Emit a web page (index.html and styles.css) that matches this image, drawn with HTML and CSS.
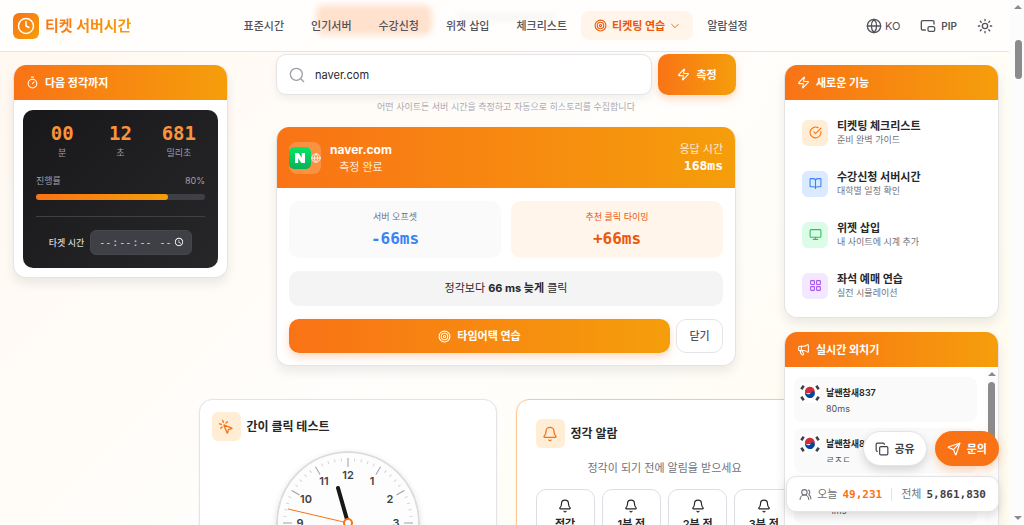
FILE: index.html
```
<!DOCTYPE html>
<html lang="ko">
<head>
    <meta charset="UTF-8">
    <meta name="viewport" content="width=device-width, initial-scale=1.0">
    <title>티켓 서버시간</title>
    <link rel="stylesheet" href="styles.css">
</head>
<body>

    <!-- Shared icons -->
    <svg class="sprite" aria-hidden="true">
        <symbol id="i-clock" viewBox="0 0 24 24"><circle cx="12" cy="12" r="10"/><path d="M12 6v6l4 2"/></symbol>
        <symbol id="i-target" viewBox="0 0 24 24"><circle cx="12" cy="12" r="10"/><circle cx="12" cy="12" r="6"/><circle cx="12" cy="12" r="2"/></symbol>
        <symbol id="i-zap" viewBox="0 0 24 24"><path d="M4 14a1 1 0 0 1-.78-1.63l9.9-10.2a.5.5 0 0 1 .86.46l-1.92 6.02A1 1 0 0 0 13 10h7a1 1 0 0 1 .78 1.63l-9.9 10.2a.5.5 0 0 1-.86-.46l1.92-6.02A1 1 0 0 0 11 14z"/></symbol>
        <symbol id="i-globe" viewBox="0 0 24 24"><circle cx="12" cy="12" r="10"/><path d="M12 2a14.5 14.5 0 0 0 0 20 14.5 14.5 0 0 0 0-20M2 12h20"/></symbol>
        <symbol id="i-bell" viewBox="0 0 24 24"><path d="M10.268 21a2 2 0 0 0 3.464 0"/><path d="M3.262 15.326A1 1 0 0 0 4 17h16a1 1 0 0 0 .74-1.673C19.41 13.956 18 12.499 18 8A6 6 0 0 0 6 8c0 4.499-1.411 5.956-2.738 7.326"/></symbol>
        <symbol id="i-flag" viewBox="0 0 20 20">
            <rect width="20" height="20" rx="4" fill="#fff" stroke="none"/>
            <path d="M5.2 10.6a5 5 0 1 1 9.6-1.2z" fill="#cd2e3a" stroke="none"/>
            <path d="M5.1 9a5 5 0 1 0 9.8 2c.2-2-1.6-3.3-3.2-2.3-1 .6-1 1.7-2.3 2.2C7.5 11.6 5.5 10.8 5.1 9z" fill="#0047a0" stroke="none"/>
            <path d="M1.3 6.2l2.4-3.4M16.3 2.8l2.4 3.4M1.3 13.8l2.4 3.4M16.3 17.2l2.4-3.4" stroke="#3f3f46" stroke-width="2.6" stroke-linecap="butt"/>
        </symbol>
    </svg>

    <div class="app">
        <div class="page">

            <header class="header">
                <span class="blur-chip"></span>
                <span class="blur-text"></span>
                <a class="logo" href="#">
                    <span class="logo-mark"><svg class="icon icon-lg"><use href="#i-clock"/></svg></span>
                    <span class="logo-text">티켓 서버시간</span>
                </a>
                <nav class="nav">
                    <a href="#">표준시간</a>
                    <a href="#">인기서버</a>
                    <a href="#">수강신청</a>
                    <a href="#">위젯 삽입</a>
                    <a href="#">체크리스트</a>
                    <button class="nav-active" type="button">
                        <svg class="icon icon-sm"><use href="#i-target"/></svg>
                        티켓팅 연습
                        <svg class="icon icon-xs" viewBox="0 0 24 24"><path d="m4 8 8 8 8-8"/></svg>
                    </button>
                    <a href="#">알람설정</a>
                </nav>
                <div class="tools">
                    <button type="button"><svg class="icon icon-md"><use href="#i-globe"/></svg>KO</button>
                    <button class="pip" type="button">
                        <svg class="icon icon-md" viewBox="0 0 24 24"><path d="M21 9V6a2 2 0 0 0-2-2H4a2 2 0 0 0-2 2v10c0 1.1.9 2 2 2h4"/><rect x="12" y="13" width="10" height="7" rx="2"/></svg>
                        PIP
                    </button>
                    <button type="button" aria-label="테마">
                        <svg class="icon icon-md" viewBox="0 0 24 24"><circle cx="12" cy="12" r="4"/><path d="M12 2v2M12 20v2M4.93 4.93l1.41 1.41M17.66 17.66l1.41 1.41M2 12h2M20 12h2M6.34 17.66l-1.41 1.41M19.07 4.93l-1.41 1.41"/></svg>
                    </button>
                </div>
            </header>

            <div class="layout">

                <!-- Countdown -->
                <aside class="side side-left">
                    <section class="card">
                        <h2 class="card-head">
                            <svg class="icon icon-sm" viewBox="0 0 24 24"><path d="M10 2h4M12 14l3-3"/><circle cx="12" cy="14" r="8"/></svg>
                            다음 정각까지
                        </h2>
                        <div class="timer">
                            <div class="timer-digits">
                                <div><strong>00</strong><span>분</span></div>
                                <div><strong>12</strong><span>초</span></div>
                                <div><strong>681</strong><span>밀리초</span></div>
                            </div>
                            <div class="timer-progress"><span>진행률</span><span>80%</span></div>
                            <div class="bar"><div class="bar-fill"></div></div>
                            <div class="timer-target">
                                <label for="target-time">타겟 시간</label>
                                <input type="time" id="target-time" step="1" lang="en-US">
                            </div>
                        </div>
                    </section>
                </aside>

                <main class="main">
                    <form class="search">
                        <div class="search-box">
                            <svg class="icon icon-md" viewBox="0 0 24 24"><circle cx="11" cy="11" r="9"/><path d="m22 22-4.3-4.3"/></svg>
                            <input type="text" value="naver.com" aria-label="사이트 주소">
                        </div>
                        <button class="btn-primary" type="button"><svg class="icon icon-sm"><use href="#i-zap"/></svg>측정</button>
                    </form>
                    <p class="hint">어떤 사이트든 서버 시간을 측정하고 자동으로 히스토리를 수집합니다</p>

                    <!-- Measurement result -->
                    <section class="card result">
                        <div class="result-head">
                            <div class="site-icon">
                                <svg class="site-logo" viewBox="0 0 22 22">
                                    <defs><linearGradient id="green" x1="0" y1="0" x2="0" y2="1"><stop offset="0" stop-color="#06e566"/><stop offset="1" stop-color="#06b259"/></linearGradient></defs>
                                    <rect width="22" height="22" rx="5" fill="url(#green)"/>
                                    <path d="M6 6h3.6l3.2 4.7V6H16v10h-3.6l-3.2-4.7V16H6z" fill="#fff"/>
                                </svg>
                                <svg class="icon icon-xs"><use href="#i-globe"/></svg>
                            </div>
                            <div class="result-site">
                                <h2>naver.com</h2>
                                <p>측정 완료</p>
                            </div>
                            <div class="result-time">
                                <p>응답 시간</p>
                                <strong>168ms</strong>
                            </div>
                        </div>
                        <div class="result-body">
                            <div class="stats">
                                <div class="stat"><span>서버 오프셋</span><strong>-66ms</strong></div>
                                <div class="stat stat-hot"><span>추천 클릭 타이밍</span><strong>+66ms</strong></div>
                            </div>
                            <p class="advice">정각보다 <strong>66 ms 늦게</strong> 클릭</p>
                            <div class="actions">
                                <button class="btn-primary" type="button"><svg class="icon icon-sm"><use href="#i-target"/></svg>타임어택 연습</button>
                                <button class="btn-plain" type="button">닫기</button>
                            </div>
                        </div>
                    </section>

                    <div class="tools-grid">
                        <section class="card tool">
                            <h2 class="tool-title">
                                <span class="tool-icon"><svg class="icon icon-md" viewBox="0 0 24 24"><path d="M14 4.1 12 6M5.1 8l-2.9-.8M6 12l-1.9 2M7.2 2.2 8 5.1"/><path d="M9.037 9.69a.498.498 0 0 1 .653-.653l11 4.5a.5.5 0 0 1-.074.949l-4.349 1.041a1 1 0 0 0-.74.739l-1.04 4.35a.5.5 0 0 1-.95.074z"/></svg></span>
                                간이 클릭 테스트
                            </h2>
                            <svg class="dial" viewBox="-72 -72 144 144">
                                <circle r="71" fill="#fdfdfd" stroke="#dcdcde" stroke-width="2"/>
                                <g id="ticks"></g>
                                <line x1="0" y1="0" x2="-10" y2="-35" stroke="#18181b" stroke-width="4" stroke-linecap="round"/>
                                <line x1="0" y1="0" x2="-60" y2="-14" stroke="#f97316" stroke-width="1"/>
                                <circle r="4" fill="#fff" stroke="#f97316" stroke-width="2"/>
                            </svg>
                        </section>
                        <section class="card tool tool-alarm">
                            <h2 class="tool-title">
                                <span class="tool-icon"><svg class="icon icon-md"><use href="#i-bell"/></svg></span>
                                정각 알람
                            </h2>
                            <p>정각이 되기 전에 알림을 받으세요</p>
                            <div class="alarms">
                                <button type="button"><svg class="icon icon-bell"><use href="#i-bell"/></svg>정각</button>
                                <button type="button"><svg class="icon icon-bell"><use href="#i-bell"/></svg>1분 전</button>
                                <button type="button"><svg class="icon icon-bell"><use href="#i-bell"/></svg>2분 전</button>
                                <button type="button"><svg class="icon icon-bell"><use href="#i-bell"/></svg>3분 전</button>
                            </div>
                        </section>
                    </div>
                </main>

                <aside class="side side-right">
                    <!-- New features -->
                    <section class="card">
                        <h2 class="card-head"><svg class="icon icon-sm"><use href="#i-zap"/></svg>새로운 기능</h2>
                        <ul class="features">
                            <li><a href="#">
                                <span class="tile tile-orange"><svg class="icon icon-sm" viewBox="0 0 24 24"><path d="M21.801 10A10 10 0 1 1 17 3.335"/><path d="m9 11 3 3L22 4"/></svg></span>
                                <span><b>티켓팅 체크리스트</b><small>준비 완벽 가이드</small></span>
                            </a></li>
                            <li><a href="#">
                                <span class="tile tile-blue"><svg class="icon icon-sm" viewBox="0 0 24 24"><path d="M12 7v14"/><path d="M3 18a1 1 0 0 1-1-1V4a1 1 0 0 1 1-1h5a4 4 0 0 1 4 4 4 4 0 0 1 4-4h5a1 1 0 0 1 1 1v13a1 1 0 0 1-1 1h-6a3 3 0 0 0-3 3 3 3 0 0 0-3-3z"/></svg></span>
                                <span><b>수강신청 서버시간</b><small>대학별 일정 확인</small></span>
                            </a></li>
                            <li><a href="#">
                                <span class="tile tile-green"><svg class="icon icon-sm" viewBox="0 0 24 24"><rect x="2" y="3" width="20" height="14" rx="2"/><path d="M8 21h8M12 17v4"/></svg></span>
                                <span><b>위젯 삽입</b><small>내 사이트에 시계 추가</small></span>
                            </a></li>
                            <li><a href="#">
                                <span class="tile tile-purple"><svg class="icon icon-sm" viewBox="0 0 24 24"><rect x="3" y="3" width="7" height="7" rx="1"/><rect x="14" y="3" width="7" height="7" rx="1"/><rect x="14" y="14" width="7" height="7" rx="1"/><rect x="3" y="14" width="7" height="7" rx="1"/></svg></span>
                                <span><b>좌석 예매 연습</b><small>실전 시뮬레이션</small></span>
                            </a></li>
                        </ul>
                    </section>

                    <!-- Live shouts -->
                    <section class="card">
                        <h2 class="card-head">
                            <svg class="icon icon-sm" viewBox="0 0 24 24"><path d="M11 6a13 13 0 0 0 8.4-2.8A1 1 0 0 1 21 4v12a1 1 0 0 1-1.6.8A13 13 0 0 0 11 14H5a2 2 0 0 1-2-2V8a2 2 0 0 1 2-2z"/><path d="M6 14a12 12 0 0 0 2.4 7.2 2 2 0 0 0 3.2-2.4A8 8 0 0 1 10 14M8 6v8"/></svg>
                            실시간 외치기
                        </h2>
                        <div class="shouts-wrap">
                            <ul class="shouts">
                                <li><svg class="flag"><use href="#i-flag"/></svg><div><b>날쌘참새837</b><span>80ms</span></div></li>
                                <li><svg class="flag"><use href="#i-flag"/></svg><div><b>날쌘참새837</b><span>ㄹㅈㄷ</span></div></li>
                                <li><svg class="flag"><use href="#i-flag"/></svg><div><b>날쌘참새837</b><span>-1ms</span></div></li>
                            </ul>
                            <div class="scrollbar scrollbar-inner">
                                <span class="arrow-up"></span>
                                <span class="thumb"></span>
                            </div>
                        </div>
                    </section>
                </aside>
            </div>

            <!-- Floating actions and visitor counter -->
            <div class="floating">
                <div class="floating-buttons">
                    <button class="share" type="button">
                        <svg class="icon icon-float" viewBox="0 0 24 24"><rect x="8" y="8" width="14" height="14" rx="2"/><path d="M4 16c-1.1 0-2-.9-2-2V4c0-1.1.9-2 2-2h10c1.1 0 2 .9 2 2"/></svg>
                        공유
                    </button>
                    <button class="contact" type="button">
                        <svg class="icon icon-float" viewBox="0 0 24 24"><path d="M14.536 21.686a.5.5 0 0 0 .937-.024l6.5-19a.496.496 0 0 0-.635-.635l-19 6.5a.5.5 0 0 0-.024.937l7.93 3.18a2 2 0 0 1 1.112 1.11z"/><path d="m21.854 2.147-10.94 10.939"/></svg>
                        문의
                    </button>
                </div>
                <div class="visitors">
                    <svg class="icon icon-sm" viewBox="0 0 24 24"><path d="M18 21a8 8 0 0 0-16 0"/><circle cx="10" cy="8" r="5"/><path d="M22 20c0-3.37-2-6.5-4-8a5 5 0 0 0-.45-8.3"/></svg>
                    <span>오늘</span><strong class="today">49,231</strong>
                    <i></i>
                    <span>전체</span><strong>5,861,830</strong>
                </div>
            </div>
        </div>

        <div class="scrollbar">
            <span class="arrow-up"></span>
            <span class="thumb"></span>
            <span class="arrow-down"></span>
        </div>
    </div>

    <script>
        // Draw dial ticks and hour numbers
        const ticks = document.getElementById("ticks");
        let marks = "";
        for (let i = 0; i < 60; i++) {
            const major = i % 5 === 0;
            marks += `<line class="${major ? "tick-major" : "tick"}" y1="-65" y2="${major ? -56 : -62}" transform="rotate(${i * 6})"/>`;
        }
        for (let h = 1; h <= 12; h++) {
            const a = h * Math.PI / 6;
            marks += `<text x="${Math.round(Math.sin(a) * 48)}" y="${Math.round(-Math.cos(a) * 48) + 4}">${h}</text>`;
        }
        ticks.innerHTML = marks;
    </script>

</body>
</html>
```
FILE: styles.css
```
* {
    box-sizing: border-box;
}
body {
    margin: 0;
    font-family: Inter, "Noto Sans CJK KR", sans-serif;
    font-size: 11px;
    line-height: 16px;
    color: #27272a;
}
h2, p, ul {
    margin: 0;
    padding: 0;
    font-size: inherit;
    list-style: none;
}
a {
    color: inherit;
    text-decoration: none;
}
button {
    display: flex;
    align-items: center;
    justify-content: center;
    border: 0;
    background: none;
    font: inherit;
    color: inherit;
    white-space: nowrap;
}
.sprite {
    display: none;
}
.icon {
    flex: none;
    fill: none;
    stroke: currentColor;
    stroke-width: 2;
    stroke-linecap: round;
    stroke-linejoin: round;
}
.icon-xs {
    width: 10px;
    height: 10px;
}
.icon-sm {
    width: 13px;
    height: 13px;
}
.icon-bell, .icon-float {
    width: 14px;
    height: 14px;
}
.icon-md {
    width: 16px;
    height: 16px;
}
.icon-lg {
    width: 18px;
    height: 18px;
}
.app {
    display: flex;
    height: 100vh;
    overflow: hidden;
}
.page {
    position: relative;
    flex: 1;
    min-width: 0;
    overflow: hidden;
    background: linear-gradient(135deg, #fff8f0, #fffefc 50%, #fffbee);
}

/* Header */
.header {
    position: relative;
    z-index: 5;
    display: flex;
    align-items: center;
    justify-content: space-between;
    height: 52px;
    padding: 0 10px 0 13px;
    background: #fffefd;
    border-bottom: 1px solid #e4e4e7;
}
.blur-chip, .blur-text {
    position: absolute;
    top: 5px;
    left: 316px;
    width: 116px;
    height: 30px;
    border-radius: 8px;
    background: #ffe1cd;
    filter: blur(3px);
}
.blur-text {
    top: 14px;
    left: 456px;
    width: 100px;
    height: 6px;
    background: #f5f4f3;
}
.logo {
    display: flex;
    align-items: center;
    gap: 6px;
    font-size: 15px;
    font-weight: 700;
}
.logo-mark {
    display: grid;
    place-items: center;
    width: 26px;
    height: 26px;
    border-radius: 6px;
    background: linear-gradient(135deg, #f97316, #f59e0b);
    color: #fff;
}
.logo-text {
    background: linear-gradient(90deg, #f97316, #f59e0b);
    background-clip: text;
    -webkit-background-clip: text;
    color: transparent;
    line-height: 22px;
}
.nav {
    position: relative;
    display: flex;
    align-items: center;
    gap: 1px;
    font-weight: 500;
    color: #52525b;
}
.nav a {
    padding: 0 13px;
    white-space: nowrap;
}
.nav-active {
    gap: 5px;
    height: 29px;
    padding: 0 13px;
    border-radius: 8px;
    background: #fff5eb;
    color: #ea580c;
    font-weight: 700;
}
.tools {
    display: flex;
    align-items: center;
    gap: 8px;
    color: #52525b;
}
.tools button {
    gap: 3px;
    padding: 6px;
}
.tools .pip {
    gap: 5px;
    font-size: 10px;
    font-weight: 600;
}

/* Sidebars share the row with the main column and sit above it */
.layout {
    display: grid;
    grid-template-columns: 215px 1fr 215px;
    align-items: start;
    padding: 0 10px 0 13px;
}
.side {
    z-index: 2;
    grid-row: 1;
    display: grid;
    gap: 14px;
    margin-top: 13px;
}
.side-left {
    grid-column: 1;
}
.side-right {
    grid-column: 3;
}
.main {
    grid-row: 1;
    grid-column: 1 / -1;
    padding-top: 2px;
}
.card {
    overflow: hidden;
    border: 1px solid #e4e4e7;
    border-radius: 13px;
    background: #fff;
    box-shadow: 0 6px 12px rgba(0, 0, 0, 0.08);
}
.side .card, .result {
    border-top: 0;
}
.card-head {
    display: flex;
    align-items: center;
    gap: 6px;
    height: 35px;
    padding: 0 12px;
    background: linear-gradient(90deg, #f97316, #f59e0b);
    color: #fff;
    font-weight: 700;
}

/* Countdown */
.timer {
    margin: 10px 9px 9px;
    padding: 13px;
    border-radius: 10px;
    background: linear-gradient(135deg, #18181b, #27272a);
    color: #9f9fa9;
    font-size: 9px;
    line-height: 13px;
}
.timer-digits {
    display: grid;
    grid-template-columns: repeat(3, 1fr);
    gap: 6px;
    text-align: center;
}
.timer-digits strong {
    display: block;
    margin-bottom: 3px;
    color: #fb923c;
    font: 700 19px/20px "DejaVu Sans Mono", monospace;
}
.timer-digits span {
    display: block;
}
.timer-progress {
    display: flex;
    justify-content: space-between;
    margin: 15px 0 7px;
}
.bar {
    height: 6px;
    border-radius: 3px;
    background: #3f3f46;
}
.bar-fill {
    width: 78%;
    height: 100%;
    border-radius: 3px;
    background: linear-gradient(90deg, #f97316, #f59e0b);
}
.timer-target {
    display: flex;
    align-items: center;
    justify-content: center;
    gap: 6px;
    margin-top: 16px;
    padding-top: 13px;
    border-top: 1px solid #3f3f46;
    color: #d4d4d8;
    font-weight: 500;
}
.timer-target input {
    width: 102px;
    height: 25px;
    padding: 0 7px;
    border: 1px solid #46464d;
    border-radius: 6px;
    background: #3f3f46;
    color: #d4d4d8;
    color-scheme: dark;
    font: 10px "DejaVu Sans Mono", monospace;
}
.timer-target input::-webkit-calendar-picker-indicator {
    margin-left: 0;
    padding: 0;
}

/* Search */
.search, .result, .hint {
    width: 460px;
    max-width: 100%;
    margin: 0 auto;
}
.search {
    display: flex;
    gap: 6px;
}
.search-box {
    display: flex;
    flex: 1;
    align-items: center;
    gap: 10px;
    height: 41px;
    padding: 0 12px;
    border: 1px solid #e4e4e7;
    border-radius: 10px;
    background: #fff;
    box-shadow: 0 4px 8px rgba(0, 0, 0, 0.06);
    color: #9f9fa9;
}
.search-box input {
    flex: 1;
    min-width: 0;
    padding: 0;
    border: 0;
    outline: 0;
    background: none;
    color: #27272a;
    font: inherit;
}
.btn-primary {
    gap: 6px;
    border-radius: 10px;
    background: linear-gradient(90deg, #f97316, #f59e0b);
    box-shadow: 0 4px 8px rgba(249, 115, 22, 0.25);
    color: #fff;
    font-weight: 700;
}
.search .btn-primary {
    width: 78px;
}
.hint {
    margin-top: 4px;
    color: #a8a8b0;
    font-size: 9px;
    text-align: center;
}

/* Measurement result */
.result {
    margin-top: 12px;
}
.result-head {
    display: flex;
    align-items: center;
    gap: 9px;
    height: 61px;
    padding: 0 12px;
    background: linear-gradient(90deg, #f97316, #f59e0b);
    color: #fff;
}
.site-icon {
    display: flex;
    align-items: center;
    width: 32px;
    height: 32px;
    border-radius: 8px;
    background: rgba(255, 255, 255, 0.2);
}
.site-logo {
    flex: none;
    width: 22px;
    height: 22px;
}
.result-site {
    text-align: center;
}
.result-site h2 {
    font-size: 12px;
    line-height: 18px;
}
.result-site p, .result-time p {
    color: #ffe9d2;
    font-size: 11px;
}
.result-time {
    margin-left: auto;
    text-align: right;
}
.result-time strong {
    display: block;
    font: 700 13px/18px "DejaVu Sans Mono", monospace;
}
.result-body {
    display: grid;
    gap: 13px;
    padding: 13px 12px 12px;
}
.stats {
    display: grid;
    grid-template-columns: 1fr 1fr;
    gap: 10px;
}
.stat {
    padding: 9px;
    border-radius: 10px;
    background: #fafafa;
    color: #71717b;
    font-size: 9px;
    line-height: 14px;
    text-align: center;
}
.stat strong {
    display: block;
    margin-top: 5px;
    color: #3b82f6;
    font: 700 16px/20px "DejaVu Sans Mono", monospace;
}
.stat-hot {
    background: #fff5eb;
}
.stat-hot, .stat-hot strong {
    color: #ea580c;
}
.advice {
    padding: 9px;
    border-radius: 10px;
    background: #f4f4f5;
    line-height: 17px;
    text-align: center;
}
.actions {
    display: flex;
    gap: 6px;
}
.actions button {
    height: 34px;
}
.actions .btn-primary {
    flex: 1;
}
.btn-plain {
    width: 47px;
    border: 1px solid #e4e4e7;
    border-radius: 10px;
    background: #fff;
    color: #52525b;
    font-weight: 500;
}

/* Click test and alarm */
.tools-grid {
    display: grid;
    grid-template-columns: 1fr 1fr;
    gap: 19px;
    width: 615px;
    max-width: 100%;
    margin: 33px auto 0;
}
.tool {
    padding: 12px;
    box-shadow: 0 1px 3px rgba(0, 0, 0, 0.06);
}
.tool-alarm {
    padding: 19px;
    border-color: #fdc88f;
}
.tool-title {
    display: flex;
    align-items: center;
    gap: 6px;
    font-size: 12px;
}
.tool-icon {
    display: grid;
    place-items: center;
    width: 29px;
    height: 29px;
    border-radius: 6px;
    background: #ffedd5;
    color: #f97316;
}
.dial {
    display: block;
    width: 144px;
    margin: 10px auto 0;
    border-radius: 50%;
    box-shadow: 0 2px 6px rgba(0, 0, 0, 0.12);
}
.dial text {
    fill: #3f3f46;
    font-size: 11px;
    font-weight: 600;
    text-anchor: middle;
}
.tick {
    stroke: #d4d4d8;
    stroke-width: 1;
}
.tick-major {
    stroke: #9f9fa9;
    stroke-width: 1;
}
.tool-alarm p {
    margin: 12px 0 13px;
    color: #71717b;
    text-align: center;
}
.alarms {
    display: grid;
    grid-template-columns: repeat(4, 1fr);
    gap: 7px;
}
.alarms button {
    flex-direction: column;
    gap: 3px;
    padding: 9px 0;
    border: 1px solid #dedee2;
    border-radius: 10px;
    background: #fff;
    font-weight: 600;
}

/* New features */
.features {
    display: grid;
    gap: 6px;
    padding: 10px 9px 9px;
}
.features a {
    display: flex;
    align-items: center;
    gap: 9px;
    height: 45px;
    padding: 0 8px;
}
.features b, .features small {
    display: block;
    line-height: 14px;
}
.features small {
    color: #71717b;
    font-size: 9px;
}
.tile {
    display: grid;
    place-items: center;
    width: 26px;
    height: 26px;
    border-radius: 6px;
}
.tile-orange {
    background: #ffedd5;
    color: #f97316;
}
.tile-blue {
    background: #dbeafe;
    color: #3b82f6;
}
.tile-green {
    background: #dcfce7;
    color: #22c55e;
}
.tile-purple {
    background: #f3e8ff;
    color: #a855f7;
}

/* Live shouts */
.shouts-wrap {
    display: flex;
    justify-content: space-between;
}
.shouts {
    display: grid;
    flex: 1;
    gap: 6px;
    padding: 10px 8px 10px 9px;
}
.shouts li {
    display: flex;
    gap: 6px;
    height: 45px;
    padding: 6px;
    border-radius: 8px;
    background: #fafafa;
}
.shouts div {
    padding-top: 2px;
}
.shouts b, .shouts span {
    display: block;
    font-size: 9px;
    line-height: 16px;
}
.shouts b {
    font-weight: 600;
}
.shouts span {
    color: #52525b;
}
.flag {
    width: 20px;
    height: 20px;
}

/* Floating */
.floating {
    position: absolute;
    right: 10px;
    bottom: 13px;
    z-index: 6;
}
.floating-buttons {
    display: flex;
    justify-content: flex-end;
    gap: 8px;
    margin-bottom: 10px;
}
.floating button {
    gap: 6px;
    height: 35px;
    padding: 0 12px;
    border-radius: 18px;
    font-weight: 600;
}
.floating .share {
    padding: 0 11px;
    border: 1px solid #e4e4e7;
    background: #fff;
    box-shadow: 0 4px 10px rgba(0, 0, 0, 0.15);
    color: #3f3f46;
}
.floating .contact {
    background: #f97316;
    box-shadow: 0 4px 10px rgba(249, 115, 22, 0.3);
    color: #fff;
}
.visitors {
    display: flex;
    align-items: center;
    gap: 5px;
    height: 36px;
    padding: 0 12px;
    border: 1px solid #e4e4e7;
    border-radius: 10px;
    background: #fff;
    box-shadow: 0 4px 8px rgba(0, 0, 0, 0.12);
    color: #71717b;
    white-space: nowrap;
}
.visitors strong {
    color: #3f3f46;
    font: 700 11px "DejaVu Sans Mono", monospace;
}
.visitors .today {
    color: #f97316;
}
.visitors i {
    width: 1px;
    height: 13px;
    margin: 0 4px;
    background: #e4e4e7;
}

/* Scrollbars */
.scrollbar {
    display: flex;
    flex-direction: column;
    align-items: center;
    width: 15px;
    padding: 5px 0 5px 3px;
    background: #fcfcfc;
}
.scrollbar .thumb {
    width: 7px;
    height: 39px;
    margin-top: 31px;
    border-radius: 4px;
    background: #8b8b8b;
}
.scrollbar-inner {
    width: 13px;
    padding: 5px 0;
}
.scrollbar-inner .thumb {
    height: 58px;
    margin-top: 6px;
}
.arrow-up, .arrow-down {
    border: 4px solid transparent;
    border-top-width: 0;
    border-bottom-color: #8b8b8b;
}
.arrow-down {
    margin-top: auto;
    border-top: 4px solid #8b8b8b;
    border-bottom-width: 0;
}
```
